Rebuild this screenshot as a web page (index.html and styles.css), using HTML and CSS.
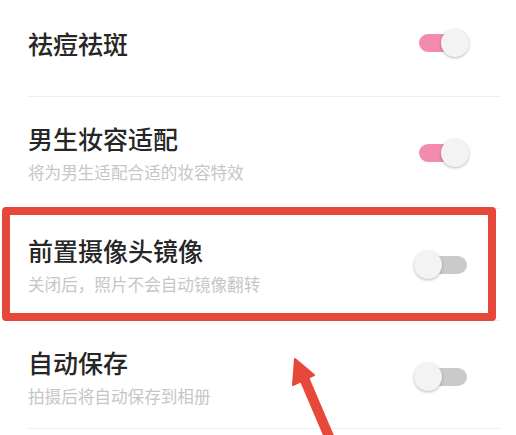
FILE: index.html
```html
<!DOCTYPE html>
<html lang="zh-CN">
<head>
<meta charset="utf-8">
<title>设置</title>
<link rel="stylesheet" href="styles.css">
</head>
<body>
<div class="page">
  <div class="list">
    <div class="row row-first">
      <div class="texts">
        <div class="title">祛痘祛斑</div>
      </div>
      <div class="switch on"><span class="track"></span><span class="knob"></span></div>
    </div>
    <div class="row">
      <div class="texts">
        <div class="title">男生妆容适配</div>
        <div class="sub">将为男生适配合适的妆容特效</div>
      </div>
      <div class="switch on"><span class="track"></span><span class="knob"></span></div>
    </div>
    <div class="row row-marked">
      <div class="texts">
        <div class="title">前置摄像头镜像</div>
        <div class="sub">关闭后，照片不会自动镜像翻转</div>
      </div>
      <div class="switch"><span class="track"></span><span class="knob"></span></div>
      <div class="mark"></div>
    </div>
    <div class="row row-last">
      <div class="texts">
        <div class="title">自动保存</div>
        <div class="sub">拍摄后将自动保存到相册</div>
      </div>
      <div class="switch"><span class="track"></span><span class="knob"></span></div>
    </div>
  </div>
  <svg class="arrow" width="516" height="435" viewBox="0 0 516 435" aria-hidden="true">
    <line x1="333" y1="446" x2="304" y2="378" stroke="#e8483a" stroke-width="10"/>
    <polygon points="295,359 314,375 293,385" fill="#e8483a" stroke="#e8483a" stroke-width="2" stroke-linejoin="round"/>
  </svg>
</div>
</body>
</html>
```

FILE: styles.css
```css
html, body {
  margin: 0;
  padding: 0;
  background: #ffffff;
}

body {
  font-family: "Noto Sans CJK SC", "Noto Sans", sans-serif;
  width: 516px;
  height: 435px;
  overflow: hidden;
}

.page {
  position: relative;
  width: 516px;
  height: 435px;
  overflow: hidden;
}

.list {
  margin-top: -10px;
  margin-left: 28px;
  margin-right: 16px;
}

.row {
  position: relative;
  display: flex;
  align-items: center;
  justify-content: space-between;
  height: 112px;
  box-sizing: border-box;
  border-bottom: 1px solid #efefef;
}

.row-first {
  height: 107px;
}

.row-last {
  height: 108px;
  padding-top: 4px;
}

.texts {
  display: flex;
  flex-direction: column;
  gap: 8px;
}

.title {
  font-size: 25px;
  line-height: 30px;
  font-weight: 500;
  color: #262626;
}

.sub {
  font-size: 16.6px;
  line-height: 22px;
  color: #c6c6c6;
}

.switch {
  position: relative;
  width: 56px;
  height: 28px;
  margin-right: 30px;
  flex: none;
}

.track {
  position: absolute;
  left: 5px;
  right: 3px;
  top: 5px;
  height: 18px;
  border-radius: 9px;
  background: #cacaca;
}

.switch.on .track {
  background: #f38ab0;
  right: 10px;
}

.knob {
  position: absolute;
  top: 0;
  left: 0;
  width: 28px;
  height: 28px;
  border-radius: 50%;
  background: #f3f3f3;
  box-shadow: 0 1px 3px rgba(0, 0, 0, 0.28);
}

.switch.on .knob {
  left: 27px;
}

.mark {
  position: absolute;
  left: -26px;
  right: 4px;
  top: -2px;
  bottom: -1px;
  border: 8px solid #e5473a;
  border-radius: 4px;
  pointer-events: none;
}

.arrow {
  position: absolute;
  left: 0;
  top: 0;
  pointer-events: none;
}
```
